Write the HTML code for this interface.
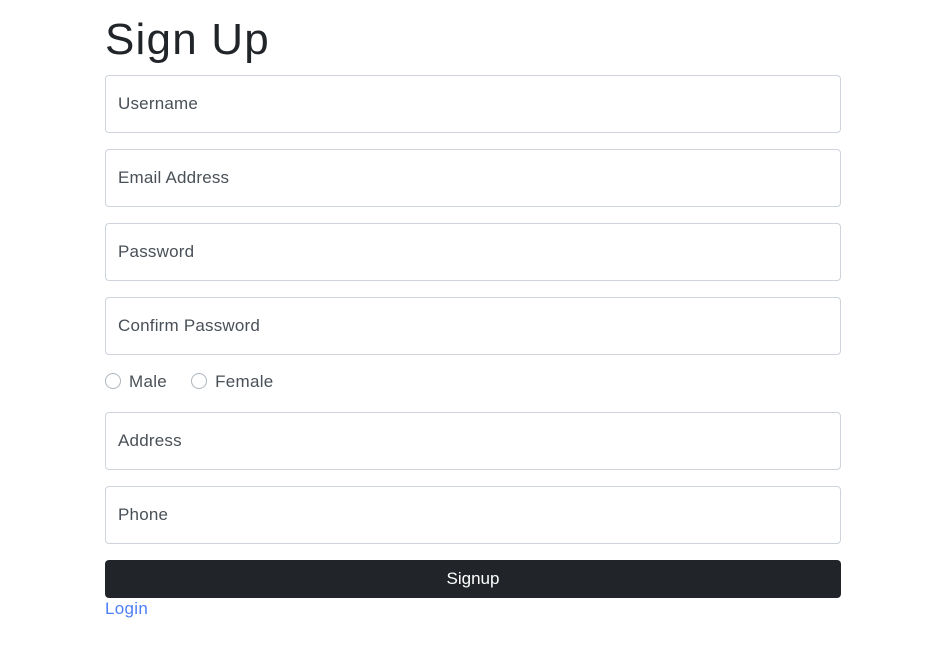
<!DOCTYPE html>
<html><head><meta charset="utf-8"><style>
body{margin:0;background:#fff;font-family:"Liberation Sans",sans-serif;color:#212529;width:951px;height:647px;overflow:hidden}
.wrap{position:absolute;left:105px;width:736px;top:0}
h1{position:absolute;top:14px;left:0;margin:0;font-weight:400;font-size:44px;line-height:52px;color:#212529;letter-spacing:1.2px}
.in{position:absolute;left:0;width:734px;height:56px;border:1px solid #ced4da;border-radius:4px;font-size:17px;color:#495057;box-sizing:content-box}
.in span{position:absolute;left:12px;top:18px;line-height:20px;letter-spacing:0.2px}
.radios{position:absolute;top:372px;left:0;font-size:17px;color:#495057;line-height:20px;letter-spacing:0.3px}
.r{display:inline-block;width:14px;height:14px;border:1px solid #adb5bd;border-radius:50%;vertical-align:-2px;margin-right:8px}
.btn{position:absolute;top:560px;left:0;width:736px;height:38px;background:#212529;border-radius:4px;color:#fff;font-size:17px;text-align:center;line-height:38px}
.login{position:absolute;top:599px;left:0;font-size:17px;color:#4d7ef7;line-height:20px;letter-spacing:0.3px}
</style></head><body>
<div class="wrap">
<h1>Sign Up</h1>
<div class="in" style="top:75px"><span>Username</span></div>
<div class="in" style="top:149px"><span>Email Address</span></div>
<div class="in" style="top:223px"><span>Password</span></div>
<div class="in" style="top:297px"><span>Confirm Password</span></div>
<div class="radios"><span class="r"></span>Male<span style="display:inline-block;width:24px"></span><span class="r"></span>Female</div>
<div class="in" style="top:412px"><span>Address</span></div>
<div class="in" style="top:486px"><span>Phone</span></div>
<div class="btn">Signup</div>
<div class="login">Login</div>
</div>
</body></html>
